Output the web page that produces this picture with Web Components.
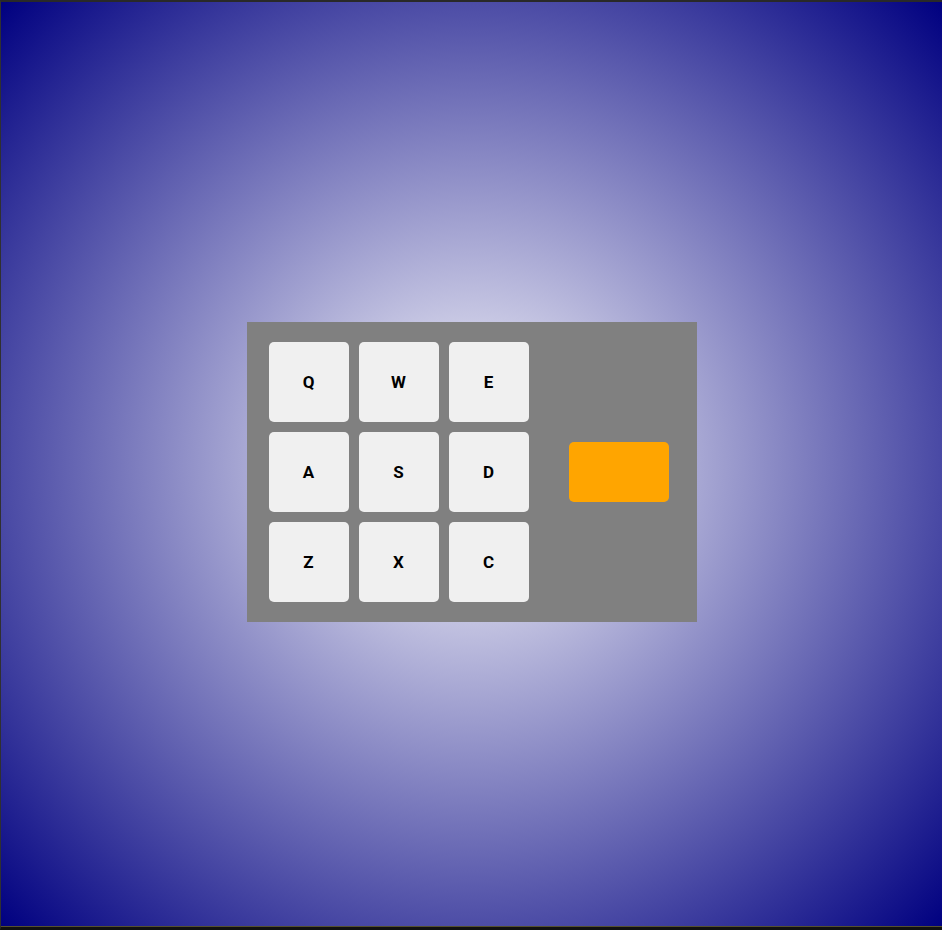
<!DOCTYPE html>
<html lang="en">
<head>
<meta charset="utf-8">
<title>Drum Machine</title>
<style>
html, body { height: 100%; margin: 0; }
body { background: #111; }
</style>
</head>
<body>
<drum-machine>
  <drum-pad>Q</drum-pad><drum-pad>W</drum-pad><drum-pad>E</drum-pad>
  <drum-pad>A</drum-pad><drum-pad>S</drum-pad><drum-pad>D</drum-pad>
  <drum-pad>Z</drum-pad><drum-pad>X</drum-pad><drum-pad>C</drum-pad>
  <drum-display slot="display"></drum-display>
</drum-machine>
<script>
class DrumPad extends HTMLElement {
  constructor() {
    super();
    this.attachShadow({ mode: "open" }).innerHTML = `
      <style>
        :host { display: block; }
        button {
          display: block; width: 80px; height: 80px; padding: 0;
          border: 0; border-radius: 5px; background: #f0f0f0; color: #000;
          font: bold 17px/20px Roboto, "Liberation Sans", sans-serif; cursor: pointer;
        }
      </style>
      <button type="button"><slot></slot></button>`;
  }
}
class DrumDisplay extends HTMLElement {
  constructor() {
    super();
    this.attachShadow({ mode: "open" }).innerHTML = `
      <style>
        :host { display: block; }
        output { display: block; width: 100px; height: 60px; border-radius: 5px; background: orange; }
      </style>
      <output aria-label="Current sound"></output>`;
  }
}
class DrumMachine extends HTMLElement {
  constructor() {
    super();
    this.attachShadow({ mode: "open" }).innerHTML = `
      <style>
        :host {
          display: flex; flex-direction: column; box-sizing: border-box; min-height: 100%;
          border: solid; border-width: 2px 0 3px 1px;
          border-color: #292929 transparent #111 #303030;
          background: radial-gradient(circle, white, navy) padding-box;
        }
        .stage {
          display: flex; flex: 1; align-items: center; justify-content: center;
          padding-top: 16px; border-bottom: 1px solid #55502f;
        }
        main {
          display: flex; align-items: center; gap: 40px; box-sizing: border-box;
          padding: 20px 28px 20px 22px; background: gray;
        }
        .pads { display: grid; grid-template-columns: repeat(3, auto); gap: 10px; }
      </style>
      <div class="stage">
        <main>
          <div class="pads"><slot></slot></div>
          <slot name="display"></slot>
        </main>
      </div>`;
  }
}
customElements.define("drum-pad", DrumPad);
customElements.define("drum-display", DrumDisplay);
customElements.define("drum-machine", DrumMachine);
</script>
</body>
</html>
